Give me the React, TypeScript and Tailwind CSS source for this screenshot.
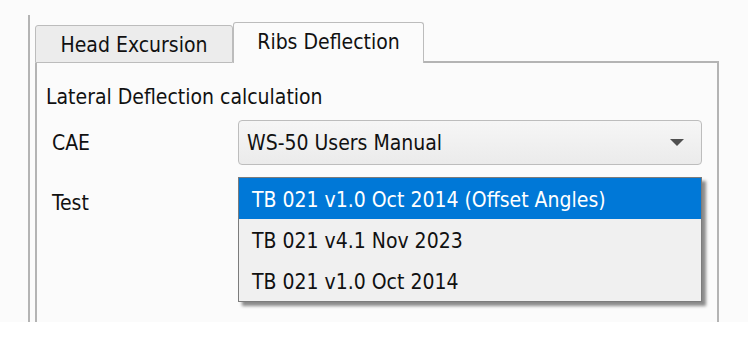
import { useState } from 'react';

const font = { fontFamily: '"DejaVu Sans Condensed", "Liberation Sans Narrow", "Liberation Sans", sans-serif' };

const tests = [
  'TB 021 v1.0 Oct 2014 (Offset Angles)',
  'TB 021 v4.1 Nov 2023',
  'TB 021 v1.0 Oct 2014',
];

function Arrow() {
  return (
    <svg width="14" height="8" viewBox="0 0 14 8">
      <path d="M0 0 L14 0 L7 7 Z" fill="#505050" />
    </svg>
  );
}

export default function App() {
  const [selected, setSelected] = useState(0);

  return (
    <div className="w-[748px] h-[346px] bg-white text-[21px] text-[#111] overflow-hidden" style={font}>
      <div className="h-[322px] bg-[#fbfbfb] pt-[15px]">
        <div className="ml-[28px] h-[307px] border-l-2 border-[#b4b4b4] pl-[5px] pt-[7px] w-[691px]">
          {/* tabs */}
          <div className="flex items-end h-[41px]">
            <div className="w-[198px] h-[38px] bg-[#ececec] border border-[#bcbcbc] rounded-t-[3px] flex items-center justify-center leading-[24px] pt-[1px]">
              Head Excursion
            </div>
            <div className="w-[191px] h-[41px] bg-[#fbfbfb] border border-b-0 border-[#bcbcbc] rounded-t-[3px] flex items-center justify-center leading-[24px] pb-[2px]">
              Ribs Deflection
            </div>
            <div className="flex-1 border-b-2 border-[#b4b4b4]" />
          </div>

          {/* panel */}
          <div className="h-[259px] border-l-2 border-r-2 border-[#b4b4b4] bg-[#fbfbfb]">
            <div className="pl-[9px] pt-[22px] leading-[24px]">Lateral Deflection calculation</div>

            <div className="flex items-center mt-[11px] pl-[15px]">
              <div className="w-[186px] leading-[24px]">CAE</div>
              <div className="w-[464px] h-[45px] rounded-[4px] border border-[#bdbdbd] bg-gradient-to-b from-[#f6f6f6] to-[#ebebeb] flex items-center justify-between pl-[8px] pr-[17px]">
                <span className="leading-[24px]">WS-50 Users Manual</span>
                <Arrow />
              </div>
            </div>

            <div className="flex items-start mt-[13px] pl-[15px]">
              <div className="w-[186px] leading-[24px] pt-[13px]">Test</div>
              <div className="relative w-[464px] h-[45px]">
                <div className="w-full h-full rounded-[4px] border border-[#bdbdbd] bg-[#efefef]" />
                <ul className="absolute left-0 -top-px w-[464px] border border-[#7c7c7c] bg-[#f0f0f0] shadow-[4px_4px_3px_rgba(0,0,0,0.45)]">
                  {tests.map((t, i) => (
                    <li
                      key={t}
                      onClick={() => setSelected(i)}
                      className={
                        i === selected
                          ? 'h-[41px] flex items-center pl-[13px] pt-[3px] leading-[24px] bg-[#0078d7] text-white'
                          : 'h-[41px] flex items-center pl-[13px] pt-[3px] leading-[24px]'
                      }
                    >
                      {t}
                    </li>
                  ))}
                </ul>
              </div>
            </div>
          </div>
        </div>
      </div>
    </div>
  );
}
